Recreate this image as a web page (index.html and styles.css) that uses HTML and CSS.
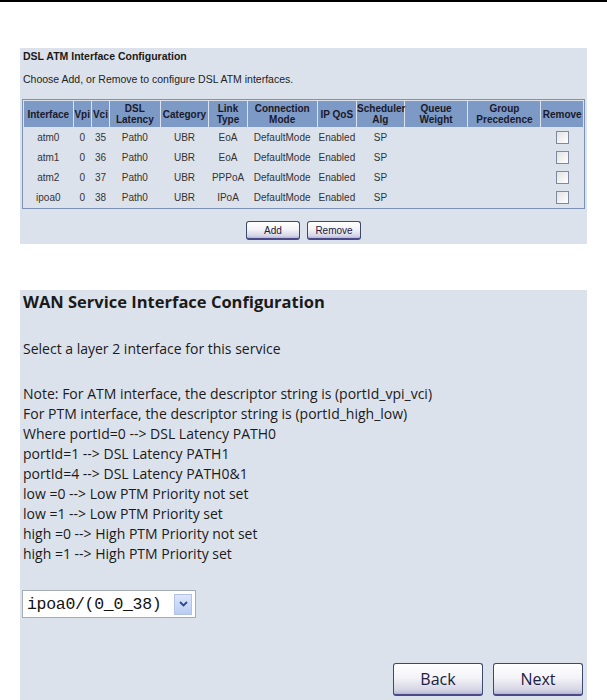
FILE: index.html
```html
<!DOCTYPE html>
<html>
<head>
<meta charset="utf-8">
<link rel="stylesheet" href="styles.css">
</head>
<body>
<div class="topline"></div>
<div class="panel small">
  <div class="p-title">DSL ATM Interface Configuration</div>
  <div class="p-desc">Choose Add, or Remove to configure DSL ATM interfaces.</div>
  <table class="atm">
    <colgroup>
      <col style="width:48px"><col style="width:17px"><col style="width:17px"><col style="width:49px"><col style="width:47px"><col style="width:37px"><col style="width:68px"><col style="width:38px"><col style="width:46px"><col style="width:62px"><col style="width:71px"><col style="width:41px">
    </colgroup>
    <tr>
      <th>Interface</th><th>Vpi</th><th>Vci</th><th>DSL<br>Latency</th><th>Category</th><th>Link<br>Type</th><th>Connection<br>Mode</th><th>IP QoS</th><th>Scheduler<br>Alg</th><th>Queue<br>Weight</th><th>Group<br>Precedence</th><th>Remove</th>
    </tr>
    <tr><td>atm0</td><td>0</td><td>35</td><td>Path0</td><td>UBR</td><td>EoA</td><td>DefaultMode</td><td>Enabled</td><td>SP</td><td></td><td></td><td><span class="cb"></span></td></tr>
    <tr><td>atm1</td><td>0</td><td>36</td><td>Path0</td><td>UBR</td><td>EoA</td><td>DefaultMode</td><td>Enabled</td><td>SP</td><td></td><td></td><td><span class="cb"></span></td></tr>
    <tr><td>atm2</td><td>0</td><td>37</td><td>Path0</td><td>UBR</td><td>PPPoA</td><td>DefaultMode</td><td>Enabled</td><td>SP</td><td></td><td></td><td><span class="cb"></span></td></tr>
    <tr><td>ipoa0</td><td>0</td><td>38</td><td>Path0</td><td>UBR</td><td>IPoA</td><td>DefaultMode</td><td>Enabled</td><td>SP</td><td></td><td></td><td><span class="cb"></span></td></tr>
  </table>
  <div class="btnrow small-btns">
    <button class="btn sm add">Add</button>
    <button class="btn sm">Remove</button>
  </div>
</div>

<div class="panel big">
  <div class="b-title">WAN Service Interface Configuration</div>
  <div class="b-select-text">Select a layer 2 interface for this service</div>
  <div class="note">
    <div>Note: For ATM interface, the descriptor string is (portId_vpi_vci)</div>
    <div>For PTM interface, the descriptor string is (portId_high_low)</div>
    <div>Where portId=0 --&gt; DSL Latency PATH0</div>
    <div>portId=1 --&gt; DSL Latency PATH1</div>
    <div>portId=4 --&gt; DSL Latency PATH0&amp;1</div>
    <div>low =0 --&gt; Low PTM Priority not set</div>
    <div>low =1 --&gt; Low PTM Priority set</div>
    <div>high =0 --&gt; High PTM Priority not set</div>
    <div>high =1 --&gt; High PTM Priority set</div>
  </div>
  <div class="select">
    <span class="sel-text">ipoa0/(0_0_38)</span>
    <span class="sel-arrow"><svg width="9" height="6" viewBox="0 0 9 6"><path d="M1 1 L4.5 4.5 L8 1" fill="none" stroke="#2b4a8a" stroke-width="1.8"/></svg></span>
  </div>
  <div class="btnrow big-btns">
    <button class="btn lg">Back</button>
    <button class="btn lg">Next</button>
  </div>
</div>
</body>
</html>
```
FILE: styles.css
```css
html, body {
  margin: 0;
  padding: 0;
  background: #ffffff;
}
body {
  font-family: "Liberation Sans", Arial, sans-serif;
  color: #1a1a1a;
}
.topline {
  height: 2px;
  background: #000;
}
.panel {
  background: #dce2ec;
  margin-left: 20px;
  width: 567px;
}
.small {
  margin-top: 46px;
  height: 195px;
  padding-top: 1px;
  font-size: 10.5px;
}
.p-title {
  font-weight: bold;
  padding: 0 3px 0;
  height: 14px;
  line-height: 14px;
}
.p-desc {
  padding: 9px 3px 0;
  line-height: 14px;
  color: #222;
}
.atm {
  margin: 13px 0 0 2px;
  border: 1px solid #7d90b5;
  border-spacing: 1px;
  table-layout: fixed;
  width: 563px;
}
.atm th {
  background: #7d99c6;
  font-weight: bold;
  color: #1a1a2a;
  line-height: 11px;
  height: 26px;
  padding: 0;
  font-size: 10px;
  white-space: nowrap;
}
.atm td {
  text-align: center;
  height: 19px;
  padding: 0;
  color: #333;
  font-size: 10px;
}
.cb {
  display: inline-block;
  width: 11px;
  height: 11px;
  border: 1px solid #7c8aa0;
  background: linear-gradient(135deg, #e2e2e2, #ffffff);
  vertical-align: middle;
}
.btnrow {
  display: flex;
  gap: 7px;
}
.small-btns {
  justify-content: center;
  margin-top: 12px;
}
.btn {
  font-family: "Liberation Sans", Arial, sans-serif;
  color: #202040;
  border: 1px solid #3c4a70;
  border-bottom: 2px solid #4a4a8a;
  border-radius: 3px;
  background: linear-gradient(#ffffff 0%, #f4f4f8 45%, #d6d6e6 85%, #b8b8d6 100%);
  padding: 0;
}
.sm {
  width: 54px;
  height: 19px;
  font-size: 10px;
}
.big {
  margin-top: 46px;
  height: 420px;
  padding-top: 0;
  font-family: "DejaVu Sans", sans-serif;
}
.b-title {
  font-family: "Open Sans", sans-serif;
  font-weight: bold;
  font-size: 16.5px;
  padding: 1px 3px 0;
  line-height: 21px;
}
.b-select-text {
  font-family: "Open Sans", sans-serif;
  font-size: 14px;
  padding: 27px 3px 0;
  line-height: 20px;
}
.note {
  font-family: "Open Sans", sans-serif;
  font-size: 14px;
  line-height: 20px;
  padding: 25px 3px 0;
}
.select {
  margin: 26px 0 0 2px;
  display: flex;
  align-items: center;
  width: 174px;
  height: 28px;
  border: 1px solid #a5acb5;
  background: #fff;
  box-sizing: border-box;
}
.sel-text {
  flex: 1;
  font-family: "Liberation Mono", monospace;
  font-size: 16.5px;
  padding-left: 4px;
  color: #111;
  letter-spacing: -0.3px;
}
.sel-arrow {
  width: 18px;
  height: 21px;
  margin-right: 3px;
  background: linear-gradient(#dce6fb, #b9cdf3);
  border: 1px solid #b2c3e6;
  display: flex;
  align-items: center;
  justify-content: center;
  box-sizing: border-box;
}
.big-btns {
  justify-content: flex-end;
  margin-top: 45px;
  padding-right: 4px;
  gap: 10px;
}
.lg {
  width: 90px;
  height: 33px;
  font-family: "Open Sans", sans-serif;
  font-size: 16px;
}
```
